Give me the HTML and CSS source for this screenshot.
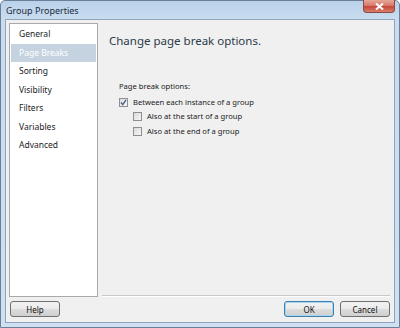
FILE: index.html
```html
<!DOCTYPE html>
<html>
<head>
<meta charset="utf-8">
<link rel="stylesheet" href="styles.css">
</head>
<body>
<div class="window">
  <div class="titlebar">
    <span class="title">Group Properties</span>
    <span class="close"><svg width="9" height="7" viewBox="0 0 9 7"><path d="M1 0.5 L8 6.5 M8 0.5 L1 6.5" stroke="#fff" stroke-width="2" fill="none"/></svg></span>
  </div>
  <div class="client">
    <div class="main">
      <ul class="nav">
        <li>General</li>
        <li class="sel">Page Breaks</li>
        <li>Sorting</li>
        <li>Visibility</li>
        <li>Filters</li>
        <li>Variables</li>
        <li>Advanced</li>
      </ul>
      <div class="content">
        <h1 class="heading">Change page break options.</h1>
        <div class="options">
          <div class="label">Page break options:</div>
          <div class="check checked"><span class="box"><svg width="9" height="9" viewBox="0 0 9 9"><path d="M2 4.5 L3.8 6.6 L7 1.8" stroke="#4a5f97" stroke-width="1.4" fill="none"/></svg></span><span>Between each instance of a group</span></div>
          <div class="check sub"><span class="box"></span><span>Also at the start of a group</span></div>
          <div class="check sub"><span class="box"></span><span>Also at the end of a group</span></div>
        </div>
        <div class="spacer"></div>
        <div class="sep"></div>
      </div>
    </div>
    <div class="footer">
      <button class="btn">Help</button>
      <div class="right">
        <button class="btn default">OK</button>
        <button class="btn">Cancel</button>
      </div>
    </div>
  </div>
</div>
</body>
</html>
```
FILE: styles.css
```css
html, body {
  margin: 0;
  padding: 0;
  width: 400px;
  height: 328px;
  overflow: hidden;
  font-family: "Noto Sans", "Open Sans", sans-serif;
}
.window {
  box-sizing: border-box;
  width: 400px;
  height: 328px;
  background: linear-gradient(to bottom, #b9d1ea 0px, #c9dcf0 18px, #cfe0f2 100%);
  border: 1px solid #6b7f96;
  border-radius: 5px 5px 0 0;
  padding: 0 4px 4px 4px;
  display: flex;
  flex-direction: column;
}
.titlebar {
  height: 18px;
  display: flex;
  align-items: flex-start;
  justify-content: space-between;
}
.title {
  font-size: 9px;
  color: #1e2a3a;
  padding: 5px 0 0 1px;
  line-height: 9px;
}
.close {
  width: 32px;
  height: 13px;
  margin-top: -1px;
  margin-right: 0;
  box-sizing: border-box;
  border: 1px solid #8a4a44;
  border-top: none;
  border-radius: 0 0 4px 4px;
  background: linear-gradient(to bottom, #e6a796 0%, #d67b6a 45%, #c7463a 55%, #da7f6c 100%);
  display: flex;
  align-items: center;
  justify-content: center;
}
.client {
  flex: 1;
  background: #f0f0f0;
  border: 1px solid #8ea4bd;
  display: flex;
  flex-direction: column;
  padding: 3px 4px 5px 3px;
}
.main {
  flex: 1;
  display: flex;
  gap: 4px;
}
.nav {
  list-style: none;
  margin: 0;
  padding: 1px 1px;
  width: 85px;
  background: #fff;
  border: 1px solid #a9a9a9;
  box-sizing: content-box;
}
.nav li {
  font-size: 8.5px;
  color: #222;
  height: 18.5px;
  line-height: 18.5px;
  padding-left: 8px;
}
.nav li.sel {
  background: #c5d3e1;
  color: #fff;
}
.content {
  flex: 1;
  display: flex;
  flex-direction: column;
}
.heading {
  font-weight: normal;
  font-size: 11.5px;
  color: #2b3a4a;
  margin: 11px 0 0 7px;
  line-height: 14px;
}
.options {
  margin: 33px 0 0 17px;
  font-size: 7.6px;
  color: #1a1a1a;
}
.label {
  line-height: 10px;
  margin-bottom: 6.5px;
}
.check {
  display: flex;
  align-items: center;
  gap: 5px;
  height: 9px;
  margin-bottom: 5.5px;
  line-height: 9px;
}
.check.sub {
  margin-left: 14px;
}
.box {
  width: 9px;
  height: 9px;
  box-sizing: border-box;
  border: 1px solid #8e8f8f;
  background: linear-gradient(135deg, #dcdcdc, #f6f6f6);
  display: flex;
  align-items: center;
  justify-content: center;
}
.box svg {
  margin: -1px;
}
.spacer {
  flex: 1;
}
.sep {
  height: 1px;
  background: #c8c8c8;
  border-bottom: 1px solid #fff;
  margin-right: 0;
}
.footer {
  display: flex;
  justify-content: space-between;
  margin-top: 4px;
  padding-left: 1px;
}
.right {
  display: flex;
  gap: 6px;
}
.btn {
  font-family: "Noto Sans", "Open Sans", sans-serif;
  font-size: 8px;
  width: 50px;
  height: 16px;
  padding: 0;
  border: 1px solid #707070;
  border-radius: 3px;
  background: linear-gradient(to bottom, #f2f2f2 0%, #ebebeb 50%, #dddddd 51%, #cfcfcf 100%);
  color: #111;
}
.btn.default {
  border-color: #3c7fb1;
  box-shadow: inset 0 0 0 1px #a8d6f2;
}
```
